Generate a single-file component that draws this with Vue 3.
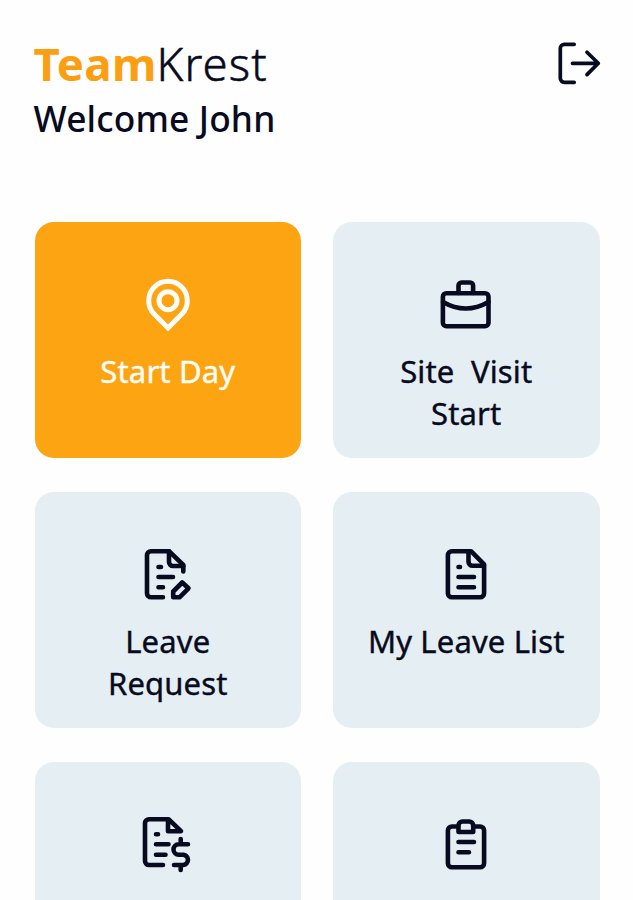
<script setup>
import { ref } from "vue";

const userName = ref("John");
const active = ref("start-day");

const menus = [
    { id: "start-day", label: "Start Day" },
    { id: "site-visit", label: "Site  Visit\nStart" },
    { id: "leave-request", label: "Leave\nRequest" },
    { id: "leave-list", label: "My Leave List" },
    { id: "expense", label: "" },
    { id: "tasks", label: "" },
];

const onMenuClick = (id) => {
    active.value = id;
};
</script>

<template>
    <div class="screen">
        <header class="header">
            <div>
                <h1 class="brand"><span class="brand-bold">Team</span><span class="brand-light">Krest</span></h1>
                <p class="welcome">Welcome {{ userName }}</p>
            </div>
            <button class="logoutBTN" aria-label="Logout">
                <svg class="logout-icon" viewBox="0 0 48 48">
                    <path d="M18.2 5.3H8.3a4 4 0 0 0-4 4v30a4 4 0 0 0 4 4h9.9" />
                    <path d="M16.5 24.3H42.3M31 13.2L42.3 24.3L31 35.6" />
                </svg>
            </button>
        </header>

        <main class="menu">
            <button
                v-for="item in menus"
                :key="item.id"
                class="card"
                :class="{ active: item.id === active }"
                @click="onMenuClick(item.id)"
            >
                <svg class="icon" viewBox="0 0 64 64">
                    <g v-if="item.id === 'start-day'" class="pin">
                        <path d="M18.4 41.3A19.3 19.3 0 1 1 45.6 41.3L32 55Z" />
                        <circle cx="32" cy="27.7" r="9" />
                    </g>
                    <g v-else-if="item.id === 'site-visit'">
                        <rect x="8.9" y="20.2" width="45.6" height="33" rx="3.5" />
                        <path d="M24.5 20V12.5a3 3 0 0 1 3-3h8.6a3 3 0 0 1 3 3V20" />
                        <path d="M9 29Q31.7 42 54.5 29" />
                    </g>
                    <g v-else-if="item.id === 'leave-request'">
                        <path d="M27 54.3H15a4 4 0 0 1-4-4V12.2a4 4 0 0 1 4-4H33L47.3 22V28.5" />
                        <path d="M33 8.2V19a4 4 0 0 0 4 4H47.3" />
                        <path d="M22.5 24H25M22.5 34H37M22.5 44.3H27" />
                        <path d="M46.2 39.5L52.5 45.3L43.5 54.3H37.2V48.5Z" />
                    </g>
                    <g v-else-if="item.id === 'leave-list'">
                        <path d="M37 8.2H17.9a4 4 0 0 0-4 4V50.3a4 4 0 0 0 4 4H46.1a4 4 0 0 0 4-4V21.3Z" />
                        <path d="M34.5 8.2V18.7a4 4 0 0 0 4 4H50" />
                        <path d="M24.5 24H26M24.5 34H40M24.5 44.3H40" />
                    </g>
                    <g v-else-if="item.id === 'expense'">
                        <path d="M27 52H13a4 4 0 0 1-4-4V10.2a4 4 0 0 1 4-4H32.5L45 18.2H32V7" />
                        <path d="M20 21.3H22M20 31.3H32.5M20 41.7H29.5" />
                        <path d="M52 31.3H42.7a5.2 5.2 0 0 0 0 10.4H47.5a5.2 5.2 0 0 1 0 10.3H38M44.7 26V31M44.7 52V57" />
                    </g>
                    <g v-else>
                        <path d="M24 13.5H17.9a4 4 0 0 0-4 4V50.2a4 4 0 0 0 4 4H46.1a4 4 0 0 0 4-4V17.5a4 4 0 0 0-4-4H40" />
                        <path d="M24.5 19V12.5a4 4 0 0 1 4-4H35.2a4 4 0 0 1 4 4V19Z" />
                        <path d="M24.5 29H40M24.5 39.3H35" />
                    </g>
                </svg>
                <span class="label">{{ item.label }}</span>
            </button>
        </main>
    </div>
</template>

<style>
body {
    margin: 0;
    background: #fefefe;
}
</style>

<style scoped>
.screen {
    box-sizing: border-box;
    height: 900px;
    overflow: hidden;
    padding: 34px 33.5px 0 34.5px;
    background: #fefefe;
    color: #080b20;
    font-family: "Noto Sans", "Open Sans", sans-serif;
}
.header {
    display: flex;
    justify-content: space-between;
    height: 188px;
}
.brand {
    margin: -1px 0 0 -1px;
    font-size: 45.5px;
    line-height: 60px;
    font-weight: 300;
    white-space: nowrap;
}
.brand-bold {
    color: #fc9e12;
    font-weight: 700;
    letter-spacing: 0.3px;
}
.brand-light {
    letter-spacing: 1.1px;
    -webkit-text-stroke: 0.5px currentColor;
}
.welcome {
    margin: 0 0 0 -1px;
    font-size: 35.3px;
    line-height: 50px;
    font-weight: 500;
    letter-spacing: 0.15px;
    white-space: nowrap;
}
.logoutBTN {
    width: 48px;
    height: 48px;
    margin: 5px -4px 0 0;
    padding: 0;
    border: none;
    background: none;
    color: inherit;
    cursor: pointer;
}
.logout-icon {
    display: block;
    width: 48px;
    height: 48px;
    fill: none;
    stroke: currentColor;
    stroke-width: 3.7;
    stroke-linecap: round;
    stroke-linejoin: round;
}
.menu {
    display: grid;
    grid-template-columns: 1fr 1fr;
    grid-auto-rows: 236px;
    gap: 34px 32px;
}
.card {
    display: flex;
    flex-direction: column;
    align-items: center;
    padding: 51px 0 0;
    border: none;
    border-radius: 19px;
    background: #e5eef2;
    color: inherit;
    font-family: inherit;
    cursor: pointer;
}
.card.active {
    background: #fda413;
    color: #fffdf8;
}
.icon {
    width: 64px;
    height: 64px;
    fill: none;
    stroke: currentColor;
    stroke-width: 4.6;
    stroke-linecap: round;
    stroke-linejoin: round;
}
.pin {
    stroke-width: 5;
    stroke-linejoin: miter;
}
.label {
    margin-top: 14px;
    font-size: 31px;
    line-height: 41.5px;
    font-weight: 400;
    letter-spacing: 0.15px;
    -webkit-text-stroke: 0.4px currentColor;
    text-align: center;
    white-space: pre;
}
</style>
